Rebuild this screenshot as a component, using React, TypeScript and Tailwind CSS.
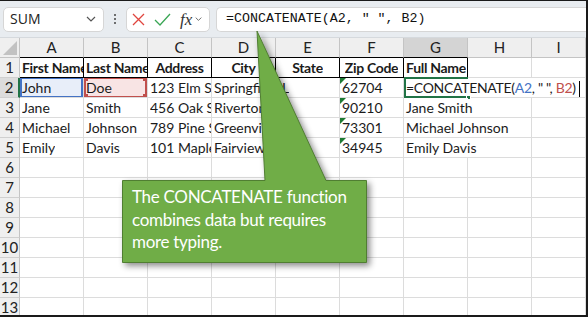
import React from 'react';

const COLS = ['A', 'B', 'C', 'D', 'E', 'F', 'G', 'H', 'I'];

const ROWS: string[][] = [
  ['First Name', 'Last Name', 'Address', 'City', 'State', 'Zip Code', 'Full Name', '', ''],
  ['John', 'Doe', '123 Elm St', 'Springfield', 'IL', '62704', '', '', ''],
  ['Jane', 'Smith', '456 Oak St', 'Riverton', '', '90210', 'Jane Smith', '', ''],
  ['Michael', 'Johnson', '789 Pine St', 'Greenville', '', '73301', 'Michael Johnson', '', ''],
  ['Emily', 'Davis', '101 Maple Ave', 'Fairview', '', '34945', 'Emily Davis', '', ''],
];

function Chevron({ className }: { className?: string }) {
  return (
    <svg width="10" height="6" viewBox="0 0 10 6" className={className}>
      <path d="M1 1 L5 5 L9 1" fill="none" stroke="#555" strokeWidth="1.2" />
    </svg>
  );
}

function Toolbar() {
  return (
    <div className="h-[37px] bg-[#e8ecf0] border-b border-[#d5d9dd] flex items-center font-['Open_Sans',sans-serif]">
      {/* name box */}
      <div className="ml-[3px] w-[101px] h-[25px] bg-white border border-[#d6d6d6] rounded-[5px] flex items-center justify-between pl-[6px] pr-[7px]">
        <span className="text-[14px] text-[#222] leading-none">SUM</span>
        <Chevron />
      </div>
      {/* dots */}
      <div className="w-[22px] flex flex-col items-center gap-[2px]">
        <span className="w-[2px] h-[2px] bg-[#444] rounded-full" />
        <span className="w-[2px] h-[2px] bg-[#444] rounded-full" />
        <span className="w-[2px] h-[2px] bg-[#444] rounded-full" />
      </div>
      {/* cancel / enter / fx */}
      <div className="w-[84px] h-[25px] bg-white border border-[#d6d6d6] rounded-[5px] flex items-center pl-[5px]">
        <svg width="13" height="13" viewBox="0 0 13 13">
          <path d="M1 1 L12 12 M12 1 L1 12" stroke="#e0463f" strokeWidth="1.3" />
        </svg>
        <svg width="17" height="13" viewBox="0 0 17 13" className="ml-[9px]">
          <path d="M1 7 L6 12 L16 1" fill="none" stroke="#3aa655" strokeWidth="1.3" />
        </svg>
        <span className="ml-[9px] font-['Liberation_Serif',serif] italic text-[17px] text-[#333] leading-none">fx</span>
        <Chevron className="ml-[3px] w-[7px]" />
      </div>
      {/* formula input */}
      <div className="ml-[6px] flex-1 h-[25px] bg-white border border-r-0 border-[#d6d6d6] rounded-l-[5px] flex items-center pl-[9px]">
        <span className="font-['Liberation_Mono',monospace] text-[13.3px] text-[#111] whitespace-pre">
          =CONCATENATE(A2, " ", B2)
        </span>
      </div>
    </div>
  );
}

function HeaderRow() {
  return (
    <>
      <div className="h-[20px] bg-[#efefef] border-r border-b border-[#c4c4c4] relative">
        <svg width="14" height="14" viewBox="0 0 14 14" className="absolute right-[2px] bottom-[2px]">
          <path d="M14 0 L14 14 L0 14 Z" fill="#c2c2c2" />
        </svg>
      </div>
      {COLS.map((c, i) => (
        <div
          key={c}
          className={`h-[20px] flex items-center justify-center text-[15px] text-[#222] border-r border-[#c4c4c4] border-b ${
            i < 7 ? 'border-b-black' : 'border-b-[#c4c4c4]'
          } ${c === 'G' ? 'bg-[#d4d4d4]' : 'bg-[#efefef]'}`}
        >
          {c}
        </div>
      ))}
    </>
  );
}

function FormulaText() {
  return (
    <span className="whitespace-pre tracking-[-0.3px]">
      =CONCATENATE(<span className="text-[#4472c4]">A2</span>, " ", <span className="text-[#c0504d]">B2</span>)
      <span className="inline-block w-[1px] h-[16px] bg-black align-middle ml-[3px]" />
    </span>
  );
}

function Cell({ r, c, value }: { r: number; c: number; value: string }) {
  const header = r === 1;
  const overflowG = c === 6 && r >= 2 && r <= 5;
  const overflowH = c === 7 && r === 2;
  let border = 'border-r border-b border-[#dcdcdc]';
  if (header && c < 7) border = 'border-r border-b border-black';
  if (overflowG || overflowH) border = 'border-b border-[#dcdcdc]';

  let bg = 'bg-white';
  if (r === 2 && c === 0) bg = 'bg-[#e8eef9]';
  if (r === 2 && c === 1) bg = 'bg-[#f8e4e4]';

  const align = header && c >= 2 && c < 6 ? 'justify-center' : 'justify-start pl-[2px]';

  return (
    <div
      className={`h-[20px] relative flex items-center ${align} ${border} ${bg} ${
        overflowG ? 'overflow-visible z-10' : 'overflow-hidden'
      } whitespace-nowrap text-[14px] text-[#1b1b1b] ${header ? 'font-bold tracking-[-0.3px]' : ''}`}
    >
      {r === 2 && c === 0 && <div className="absolute inset-x-0 -top-[1px] -bottom-[1px] border-2 border-[#4472c4]" />}
      {r === 2 && c === 1 && (
        <div className="absolute inset-x-0 -top-[1px] -bottom-[1px] border-2 border-[#c0504d]">
          <span className="absolute -left-[3px] -top-[3px] w-[5px] h-[5px] bg-[#c0504d]" />
          <span className="absolute -right-[3px] -top-[3px] w-[5px] h-[5px] bg-[#c0504d]" />
          <span className="absolute -left-[3px] -bottom-[3px] w-[5px] h-[5px] bg-[#c0504d]" />
          <span className="absolute -right-[3px] -bottom-[3px] w-[5px] h-[5px] bg-[#c0504d]" />
        </div>
      )}
      {r === 2 && c === 6 && (
        <div className="absolute left-0 right-0 -top-[1px] -bottom-[1px] border-2 border-r-0 border-[#217346]">
          <span className="absolute -right-[3px] -bottom-[4px] w-[5px] h-[5px] bg-[#217346] border border-white" />
        </div>
      )}
      {c === 5 && r >= 2 && r <= 5 && (
        <svg width="6" height="6" viewBox="0 0 6 6" className="absolute left-0 top-0">
          <path d="M0 0 L6 0 L0 6 Z" fill="#1e7b34" />
        </svg>
      )}
      <span className={`relative ${overflowG ? '' : 'block min-w-0 overflow-hidden'}`}>
        {r === 2 && c === 6 ? <FormulaText /> : value}
      </span>
    </div>
  );
}

function Callout() {
  return (
    <>
      <svg
        width="588"
        height="317"
        viewBox="0 0 588 317"
        className="absolute left-0 top-0 pointer-events-none z-20 drop-shadow-[3px_3px_3px_rgba(0,0,0,0.45)]"
      >
        <polygon
          points="122.5,179.5 265,179.5 257,30 326,179.5 366.5,179.5 366.5,261.5 122.5,261.5"
          fill="#70ad47"
          stroke="#507e32"
          strokeWidth="1"
        />
      </svg>
      <div className="absolute left-[132px] top-[185px] z-30 text-white text-[17px] tracking-[-0.3px] leading-[22.5px] font-['Lato',sans-serif]">
        <div>The CONCATENATE function</div>
        <div>combines data but requires</div>
        <div>more typing.</div>
      </div>
    </>
  );
}

export default function App() {
  const body: string[][] = [...ROWS];
  while (body.length < 13) body.push(['', '', '', '', '', '', '', '', '']);

  return (
    <div className="w-[588px] h-[317px] relative overflow-hidden bg-white border-t border-r-2 border-b-2 border-[#1a1a1a] font-['Lato',sans-serif]">
      <Toolbar />
      <div className="grid grid-cols-[20px_repeat(8,64px)_1fr]">
        <HeaderRow />
        {body.map((row, ri) => (
          <React.Fragment key={ri}>
            <div
              className={`h-[20px] flex items-center justify-center text-[15px] text-[#222] border-b border-[#d0d0d0] ${
                ri === 1 ? 'bg-[#dcdcdc] border-r-2 border-r-[#217346]' : 'bg-[#efefef] border-r border-r-[#c4c4c4]'
              }`}
            >
              {ri + 1}
            </div>
            {row.map((v, ci) => (
              <Cell key={ci} r={ri + 1} c={ci} value={v} />
            ))}
          </React.Fragment>
        ))}
      </div>
      <Callout />
    </div>
  );
}
